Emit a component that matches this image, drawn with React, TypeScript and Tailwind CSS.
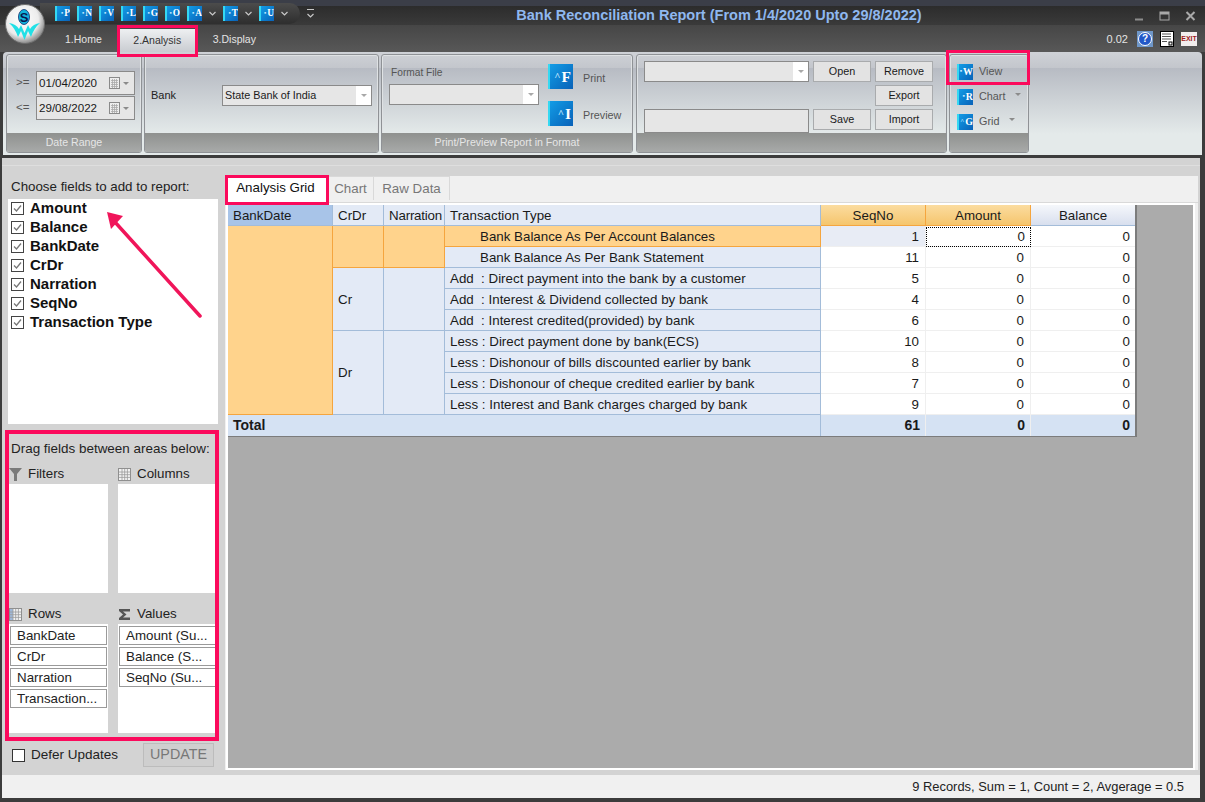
import React from 'react';

const PINK = 'border-[#fb0a5c]';

// Small glossy blue book icon used for every toolbar command
const BookIcon = ({ letter, size = 15, mark = '▪' }: { letter: string; size?: number; mark?: string }) => (
  <span
    className="flex shrink-0 items-center justify-end overflow-hidden border-l-2 border-[#35d8f2] bg-gradient-to-br from-[#149ce6] to-[#0a62b8] font-bold leading-none text-white"
    style={{ width: size, height: size, fontSize: size * 0.62, fontFamily: '"Liberation Serif", serif', paddingRight: size > 20 ? 2 : 0 }}
  >
    <span className="mr-px text-[0.7em] leading-none text-[#bfe6ff]">{mark}</span>
    {letter}
  </span>
);

const Caret = ({ className = '' }: { className?: string }) => (
  <span className={`h-0 w-0 border-x-[3px] border-t-[3px] border-x-transparent border-t-[#8b8b8b] ${className}`} />
);

const Chevron = ({ className = 'mx-[6px]' }: { className?: string }) => (
  <svg width="9" height="9" viewBox="0 0 9 9" className={`shrink-0 ${className}`}>
    <polyline points="1.5,3 4.5,6 7.5,3" fill="none" stroke="#c8c8c8" strokeWidth="1.2" />
  </svg>
);

const Logo = () => (
  <svg width="40" height="40" viewBox="0 0 40 40" className="absolute left-[5px] top-[4px]">
    <defs>
      <radialGradient id="logoBg" cx="42%" cy="38%" r="65%">
        <stop offset="0%" stopColor="#ffffff" />
        <stop offset="65%" stopColor="#ececec" />
        <stop offset="100%" stopColor="#7d7d7d" />
      </radialGradient>
    </defs>
    <circle cx="20" cy="20" r="19.500" fill="url(#logoBg)" stroke="#6c6c6c" />
    <ellipse cx="19" cy="13" rx="5.500" ry="7.500" fill="#14b4dc" stroke="#0a2a6a" strokeWidth="0.8" />
    <text x="19" y="17.500" textAnchor="middle" fontSize="13" fontWeight="700" fill="#081850" fontFamily="Liberation Sans, sans-serif">S</text>
    <path d="M4 19 Q11 20 14 25 L16 21 L19.500 29 L23 21 L25 25 Q28 20 35 19 Q29 24 26 33 L23 27 L19.500 36 L16 27 L13 33 Q10 24 4 19Z" fill="#22e0e6" />
  </svg>
);

const DateBox = ({ value }: { value: string }) => (
  <div className="flex h-[24px] w-[99px] items-center border border-[#8a8a8a] bg-[#e6e6e6] pl-[2px] text-[11.6px] text-[#1a1a1a]">
    <span className="flex-1">{value}</span>
    <svg width="11" height="12" viewBox="0 0 11 12" className="mr-[2px]">
      <rect x="0.5" y="0.5" width="10" height="11" fill="#eee" stroke="#8a8a8a" />
      <path d="M2 3.500h7M2 5.500h7M2 7.500h7M2 9.500h7M3.500 2v9M5.500 2v9M7.500 2v9" stroke="#aaa" strokeWidth="0.8" />
    </svg>
    <Caret className="ml-[1px] mr-[5px]" />
  </div>
);

const Combo = ({ value = '', className = '' }: { value?: string; className?: string }) => (
  <div className={`flex items-center border border-[#8a8a8a] bg-[#e6e6e6] pl-[2px] text-[10.8px] text-[#1a1a1a] ${className}`}>
    <span className="flex-1">{value}</span>
    <span className="flex h-full w-[15px] items-center justify-center bg-white">
      <Caret className="border-t-[#a8a8a8]" />
    </span>
  </div>
);

const RibbonButton = ({ label }: { label: string }) => (
  <div className="flex h-[21px] w-[58px] items-center justify-center border border-[#a9abad] bg-[#e3e3e3] text-[10.8px] text-[#1a1a1a]">
    {label}
  </div>
);

const RibbonGroup = ({
  width,
  title,
  className = '',
  children,
}: {
  width: string;
  title: string;
  className?: string;
  children: React.ReactNode;
}) => (
  <section className={`flex h-full shrink-0 flex-col rounded-[3px] border border-[#8f9296] shadow-[inset_0_0_0_1px_#dfe2e4] ${width} ${className}`}>
    <div className="min-h-0 flex-1">{children}</div>
    <div className="flex h-[19px] shrink-0 items-center justify-center rounded-b-[2px] bg-gradient-to-b from-[#8f918f] to-[#a8aaa9] text-[10.6px] text-[#e6e6e6]">
      {title}
    </div>
  </section>
);

const FIELDS = ['Amount', 'Balance', 'BankDate', 'CrDr', 'Narration', 'SeqNo', 'Transaction Type'];

const FieldCheck = ({ label }: { label: string }) => (
  <div className="flex h-[19px] items-center gap-[6px] pl-[3px] text-[15px] font-bold text-[#111]">
    <span className="flex h-[13px] w-[13px] items-center justify-center border border-[#444] bg-white">
      <svg width="11" height="11" viewBox="0 0 11 11">
        <polyline points="2,5.500 4.500,8 9,2.500" fill="none" stroke="#777" strokeWidth="1.3" />
      </svg>
    </span>
    {label}
  </div>
);

const TableIcon = ({ tint = false }: { tint?: boolean }) => (
  <svg width="13" height="13" viewBox="0 0 13 13" className="shrink-0">
    <rect x="0.5" y="0.5" width="12" height="12" fill="#f2f2f2" stroke="#8f8f8f" />
    {tint && <rect x="1" y="1" width="3" height="11" fill="#9fb8d8" />}
    <path d="M4 1v11M6.700 1v11M9.400 1v11M1 4h11M1 6.700h11M1 9.400h11" stroke="#9a9a9a" strokeWidth="0.8" />
  </svg>
);

const AreaLabel = ({ icon, label }: { icon: React.ReactNode; label: string }) => (
  <div className="flex h-[19px] items-center gap-[6px] pb-px text-[13.33px] text-[#222]">
    {icon}
    {label}
  </div>
);

const PivotChip = ({ label, clipped }: { label: string; clipped?: boolean }) => (
  <div className={`flex h-[19px] items-center overflow-hidden whitespace-nowrap border border-[#9a9a9a] bg-white pl-[6px] text-[13.33px] text-[#222] ${clipped ? 'w-[110px] border-r-0' : ''}`}>
    {label}
  </div>
);

const DropArea = ({ items = [], clipped }: { items?: string[]; clipped?: boolean }) => (
  <div className="flex h-[109px] flex-col gap-[2px] overflow-hidden bg-white pl-[1px] pr-[1px] pt-[2px]">
    {items.map((item) => (
      <PivotChip key={item} label={item} clipped={clipped} />
    ))}
  </div>
);

type Row = { type: string; seq: number; indent?: boolean };

const ROWS: Row[] = [
  { type: 'Bank Balance As Per Account Balances', seq: 1, indent: true },
  { type: 'Bank Balance As Per Bank Statement', seq: 11, indent: true },
  { type: 'Add  : Direct payment into the bank by a customer', seq: 5 },
  { type: 'Add  : Interest & Dividend collected by bank', seq: 4 },
  { type: 'Add  : Interest credited(provided) by bank', seq: 6 },
  { type: 'Less : Direct payment done by bank(ECS)', seq: 10 },
  { type: 'Less : Dishonour of bills discounted earlier by bank', seq: 8 },
  { type: 'Less : Dishonour of cheque credited earlier by bank', seq: 7 },
  { type: 'Less : Interest and Bank charges charged by bank', seq: 9 },
];

const headBase = 'flex items-center border-r border-b border-[#a3bcd9] pl-[5px] pt-px';
const blueSpan = `${headBase} bg-[#e3eaf6]`;
const orangeSpan = 'flex items-center border-r border-b border-[#f5a53e] bg-[#ffd38c] pl-[5px] pt-px';
const valueBase = 'flex items-center justify-end border-b border-[#efefef] pt-px';
const totalCell = 'flex items-center justify-end border-r border-[#efefef] bg-[#d5e2f3] pr-[5px] font-bold text-[14px]';

const PivotGrid = () => (
  <div className="grid w-fit grid-cols-[105px_51px_61px_376px_105px_105px_104px] auto-rows-[21px] border-b border-r-2 border-[#7c7c7c] text-[13.33px] text-[#1a1a1a]">
    <div className={`${headBase} bg-[#a8c4e8]`}>BankDate</div>
    <div className={blueSpan}>CrDr</div>
    <div className={`${blueSpan} pl-[4px] tracking-[-0.2px]`}>Narration</div>
    <div className={blueSpan}>Transaction Type</div>
    <div className="flex items-center justify-center border-r border-b border-[#f5a53e] bg-gradient-to-b from-[#fbdc9f] to-[#f5c56c] pt-px">SeqNo</div>
    <div className="flex items-center justify-center border-r border-b border-[#f5a53e] bg-gradient-to-b from-[#fbdc9f] to-[#f5c56c] pt-px">Amount</div>
    <div className="flex items-center justify-center border-b border-[#a3bcd9] bg-gradient-to-b from-[#f5f7fb] to-[#d8dfee] pt-px">Balance</div>

    {ROWS.map((row, i) => (
      <React.Fragment key={row.type}>
        {i === 0 && <div className={`${orangeSpan} row-span-9`} />}
        {i === 0 && <div className={`${orangeSpan} row-span-2`} />}
        {i === 0 && <div className={`${orangeSpan} row-span-2`} />}
        {i === 2 && <div className={`${blueSpan} row-span-3`}>Cr</div>}
        {i === 2 && <div className={`${blueSpan} row-span-3`} />}
        {i === 5 && <div className={`${blueSpan} row-span-4`}>Dr</div>}
        {i === 5 && <div className={`${blueSpan} row-span-4`} />}
        <div className={`${i === 0 ? orangeSpan : blueSpan} whitespace-pre ${row.indent ? 'pl-[35px]' : ''}`}>{row.type}</div>
        <div className={`${valueBase} border-r pr-[6px] ${i === 0 ? 'bg-[#e8ecf5]' : 'bg-white'}`}>{row.seq}</div>
        {i === 0 ? (
          <div className={`${valueBase} bg-white`}>
            <span className="flex h-[20px] w-full items-center justify-end border border-dotted border-black pr-[5px]">0</span>
          </div>
        ) : (
          <div className={`${valueBase} border-r bg-white pr-[6px]`}>0</div>
        )}
        <div className={`${valueBase} bg-white pr-[5px]`}>0</div>
      </React.Fragment>
    ))}

    <div className="col-span-4 flex items-center border-r border-[#a3bcd9] bg-[#d5e2f3] pl-[5px] text-[14px] font-bold">Total</div>
    <div className={totalCell}>61</div>
    <div className={totalCell}>0</div>
    <div className={`${totalCell} border-r-0`}>0</div>
  </div>
);

export default function App() {
  return (
    <div className="relative flex h-[802px] w-[1205px] flex-col overflow-hidden bg-[#3c3c3c] font-['Liberation_Sans',Arial,sans-serif]">
      {/* Title bar */}
      <header className="flex h-[25px] shrink-0 bg-[linear-gradient(180deg,#3b3e48_0,#3b3e48_6px,#2c2c2c_6px,#3a3a3a_25px)]">
        <div className="ml-[40px] mt-[3px] flex h-[21px] w-[260px] items-center rounded-r-[11px] bg-gradient-to-b from-[#4c4c4c] to-[#2e2e2e] pl-[15px]">
          {['P', 'N', 'V', 'L', 'G', 'O'].map((l) => (
            <span key={l} className="mr-[7px]">
              <BookIcon letter={l} />
            </span>
          ))}
          <BookIcon letter="A" />
          <Chevron />
          <BookIcon letter="T" />
          <Chevron />
          <BookIcon letter="U" />
          <Chevron />
        </div>
        <div className="ml-[3px] mt-[9px] flex w-[15px] flex-col items-center">
          <span className="mb-[1px] h-px w-[7px] bg-[#c8c8c8]" />
          <Chevron className="" />
        </div>
        <h1 className="flex-1 pt-[6px] text-center text-[14.5px] font-bold leading-[19px] text-[#8fb8ef]">
          Bank Reconciliation Report (From 1/4/2020 Upto 29/8/2022)
        </h1>
        <div className="flex w-[85px] items-center gap-[15px] pl-[14px] pt-[6px]">
          <svg width="10" height="10" viewBox="0 0 10 10"><rect x="1" y="7.500" width="8" height="2" fill="#8d8d8d" /></svg>
          <svg width="11" height="10" viewBox="0 0 11 10"><rect x="1" y="1" width="9" height="8" fill="none" stroke="#a9a9a9" /><rect x="1" y="1" width="9" height="2.500" fill="#a9a9a9" /></svg>
          <svg width="11" height="10" viewBox="0 0 11 10"><path d="M1.500 1l8 8M9.500 1l-8 8" stroke="#a9a9a9" strokeWidth="2" /></svg>
        </div>
      </header>

      <Logo />

      {/* Tabs row */}
      <nav className="flex h-[27px] shrink-0 items-center bg-gradient-to-b from-[#464646] to-[#585858] text-[10.5px] text-[#e4e4e4]">
        <span className="ml-[65px] pt-[3px]">1.Home</span>
        <span className="relative ml-[18px] mt-[4px] flex h-[23px] w-[77px] items-center justify-center border-r-2 border-[#8fc0bd] bg-gradient-to-b from-[#eef0f2] to-[#c9ccd1] text-[#333]">
          2.Analysis
          <span className={`absolute -inset-x-[3px] -bottom-[5px] -top-[4px] border-[3px] ${PINK}`} />
        </span>
        <span className="ml-[16px] pt-[3px]">3.Display</span>
        <span className="ml-auto mr-[9px] pt-[2px] text-[11px]">0.02</span>
        <span className="flex h-[16px] w-[16px] items-center justify-center bg-[#6f97c9]">
          <span className="flex h-[14px] w-[14px] items-center justify-center rounded-full border border-white bg-[#2258c8] text-[10px] font-bold text-white">?</span>
        </span>
        <svg width="14" height="16" viewBox="0 0 14 16" className="ml-[7px]">
          <rect x="0.500" y="0.500" width="13" height="15" fill="#fff" stroke="#000" />
          <path d="M2 3h9M2 5.500h9M2 8h9M2 10.500h5" stroke="#555" />
          <rect x="9" y="11" width="3" height="3" fill="#fff" stroke="#000" />
        </svg>
        <span className="ml-[7px] mr-[8px] flex h-[14px] w-[16px] items-center justify-center bg-[#f2eeee] text-[7px] font-bold leading-none text-[#a01c1c]">EXIT</span>
      </nav>

      {/* Ribbon */}
      <div className="mx-[3px] flex h-[103px] shrink-0 gap-[2px] rounded-t-[4px] bg-[linear-gradient(180deg,#cfd2d7_0,#c3c6cc_16px,#b7bbc3_16px,#e4eaea_82px)] pb-[2px] pl-[3px] pt-[2px] text-[#444]">
        <RibbonGroup width="w-[136px]" title="Date Range">
          <div className="grid grid-cols-[12px_99px] items-center gap-x-[8px] gap-y-px pl-[9px] pt-[16px] text-[11.5px]">
            <span className="text-[#555]">&gt;=</span>
            <DateBox value="01/04/2020" />
            <span className="text-[#555]">&lt;=</span>
            <DateBox value="29/08/2022" />
          </div>
        </RibbonGroup>

        <RibbonGroup width="w-[235px]" title="">
          <div className="flex items-center pl-[6px] pt-[30px] text-[11px] text-[#222]">
            <span className="w-[71px]">Bank</span>
            <Combo value="State Bank of India" className="h-[21px] w-[150px]" />
          </div>
        </RibbonGroup>

        <RibbonGroup width="w-[252px]" title="Print/Preview Report in Format">
          <div className="flex pl-[7px] pt-[9px] text-[10.8px]">
            <div className="w-[159px]">
              <div className="h-[20px] pl-[2px] text-[10.2px] leading-[18px] text-[#555]">Format File</div>
              <Combo className="h-[21px] w-[150px]" />
            </div>
            <div className="flex flex-col gap-[12px] text-[#555]">
              <div className="flex items-center gap-[10px]">
                <BookIcon letter="F" size={25} mark="^" />
                <span className="pt-[3px]">Print</span>
              </div>
              <div className="flex items-center gap-[10px]">
                <BookIcon letter="I" size={25} mark="^" />
                <span className="pt-[3px]">Preview</span>
              </div>
            </div>
          </div>
        </RibbonGroup>

        <RibbonGroup width="w-[311px]" title="" className="ml-px">
          <div className="grid grid-cols-[165px_58px_58px] gap-x-[4px] gap-y-[3px] pl-[7px] pt-[6px]">
            <Combo className="h-[21px] w-[165px]" />
            <RibbonButton label="Open" />
            <RibbonButton label="Remove" />
            <span />
            <span />
            <RibbonButton label="Export" />
            <div className="h-[24px] w-[165px] self-end border border-[#8a8a8a] bg-[#e6e6e6]" />
            <RibbonButton label="Save" />
            <RibbonButton label="Import" />
          </div>
        </RibbonGroup>

        <RibbonGroup width="w-[80px]" title="">
          <div className="flex flex-col gap-[8px] pl-[7px] pt-[8px] text-[10.8px] text-[#555]">
            <div className="relative flex h-[17px] items-center gap-[6px]">
              <BookIcon letter="W" size={16} />
              View
              <span className={`absolute -left-[11px] -top-[13px] h-[35px] w-[84px] border-[3px] ${PINK}`} />
            </div>
            <div className="flex h-[17px] items-center gap-[6px]">
              <BookIcon letter="R" size={16} />
              Chart
              <Caret className="ml-[4px] -translate-y-[2px]" />
            </div>
            <div className="flex h-[17px] items-center gap-[6px]">
              <BookIcon letter="G" size={16} mark="^" />
              Grid
              <Caret className="ml-[4px] -translate-y-[2px]" />
            </div>
          </div>
        </RibbonGroup>
      </div>

      {/* Body */}
      <main className="relative ml-[2px] mr-[5px] mt-[3px] flex h-[640px] shrink-0 flex-col bg-[#d3d3d3] text-[#222]">
        <div className="mt-[7px] h-px shrink-0 bg-[#dedede]" />
        <div className="flex min-h-0 flex-1">
          <aside className="ml-[3px] flex w-[214px] shrink-0 flex-col">
            <div className="flex h-[33px] items-end pb-[2px] pl-[6px] text-[13.33px]">Choose fields to add to report:</div>
            <div className="ml-[3px] h-[225px] w-[210px] bg-white">
              {FIELDS.map((field) => (
                <FieldCheck key={field} label={field} />
              ))}
            </div>

            <div className={`mt-[6px] h-[311px] border-4 ${PINK}`}>
              <div className="flex h-[28px] items-center pl-[2px] pt-[2px] text-[13.45px]">Drag fields between areas below:</div>
              <div className="grid grid-cols-[99px_97px] gap-x-[10px] pt-[3px]">
                <div>
                  <AreaLabel
                    icon={
                      <svg width="13" height="13" viewBox="0 0 13 13" className="shrink-0">
                        <path d="M0 0h13L8 6v7H5V6Z" fill="#7a7a7a" />
                      </svg>
                    }
                    label="Filters"
                  />
                  <DropArea />
                </div>
                <div>
                  <AreaLabel icon={<TableIcon />} label="Columns" />
                  <DropArea />
                </div>
                <div className="pt-[12px]">
                  <AreaLabel icon={<TableIcon tint />} label="Rows" />
                  <DropArea items={['BankDate', 'CrDr', 'Narration', 'Transaction...']} />
                </div>
                <div className="pt-[12px]">
                  <AreaLabel
                    icon={
                      <svg width="13" height="13" viewBox="0 0 13 13" className="shrink-0">
                        <path d="M1 1h11v2.500H5l3.500 3-3.500 3h7V12H1V10l4-3.500L1 3Z" fill="#555" />
                      </svg>
                    }
                    label="Values"
                  />
                  <DropArea items={['Amount (Su...', 'Balance (S...', 'SeqNo (Su...']} clipped />
                </div>
              </div>
            </div>

            <div className="flex h-[28px] items-center pl-[7px] pr-[5px] text-[13.5px]">
              <span className="mr-[6px] h-[13px] w-[13px] border border-[#333] bg-white" />
              Defer Updates
              <span className="ml-auto flex h-[24px] w-[71px] items-center justify-center border border-[#bcbcbc] bg-[#cfcfcf] text-[14.3px] text-[#777]">UPDATE</span>
            </div>
          </aside>

          <section className="ml-[6px] mt-[10px] flex w-[973px] flex-col bg-[#f0f0f0]">
            <div className="flex h-[27px] shrink-0 border-b border-[#d9d9d9] pl-[3px] text-[13.33px]">
              <span className="relative flex h-[26px] w-[100px] items-center justify-center bg-white pb-[3px] pr-[5px] text-[#111]">
                Analysis Grid
                <span className={`absolute -left-[3px] -top-[1px] h-[30px] w-[104px] border-[3px] ${PINK}`} />
              </span>
              <span className="flex h-[24px] w-[46px] items-center justify-center border-r border-t border-[#d9d9d9] text-[#777]">Chart</span>
              <span className="flex h-[24px] w-[76px] items-center justify-center border-r border-t border-[#d9d9d9] text-[#777]">Raw Data</span>
            </div>
            <div className="ml-[1px] mr-[3px] flex-1 border-[2px] border-white bg-[#ababab]">
              <PivotGrid />
            </div>
          </section>
        </div>

        <footer className="mt-[5px] flex h-[23px] shrink-0 items-center justify-end bg-[#f0f0f0] pr-[16px] text-[12.9px] text-[#222]">
          9 Records, Sum = 1, Count = 2, Avgerage = 0.5
        </footer>
      </main>

      {/* Annotation arrow */}
      <svg width="120" height="120" viewBox="0 0 120 120" className="pointer-events-none absolute left-[95px] top-[205px]">
        <path d="M105 111 L19 16" stroke="#f0155a" strokeWidth="3.500" strokeLinecap="round" />
        <path d="M12 7 L28 11 L16 24 Z" fill="#f0155a" />
      </svg>
    </div>
  );
}
